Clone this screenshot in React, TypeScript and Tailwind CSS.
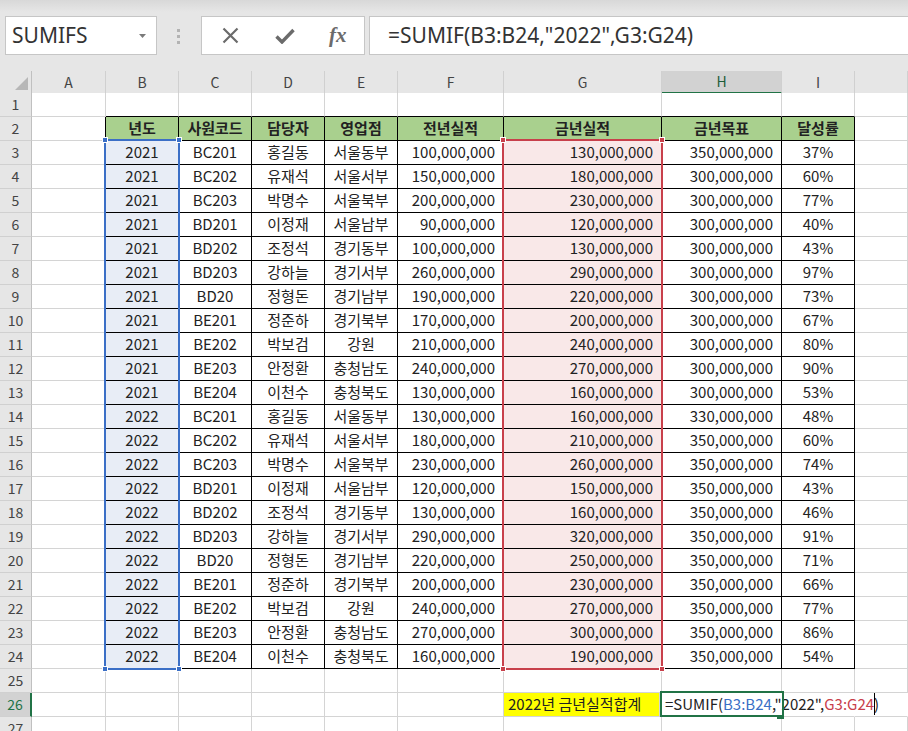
import React from 'react'

const GRID = 'grid grid-cols-[32px_74px_73px_73px_73px_73px_106px_158px_120px_73px_1fr]'
const CELL_FONT = "font-['Noto_Sans_CJK_KR',sans-serif]"

type Row = [string, string, string, string, string, string, string, string]

const header: Row = ['년도', '사원코드', '담당자', '영업점', '전년실적', '금년실적', '금년목표', '달성률']

const rows: Row[] = [
  ['2021', 'BC201', '홍길동', '서울동부', '100,000,000', '130,000,000', '350,000,000', '37%'],
  ['2021', 'BC202', '유재석', '서울서부', '150,000,000', '180,000,000', '300,000,000', '60%'],
  ['2021', 'BC203', '박명수', '서울북부', '200,000,000', '230,000,000', '300,000,000', '77%'],
  ['2021', 'BD201', '이정재', '서울남부', '90,000,000', '120,000,000', '300,000,000', '40%'],
  ['2021', 'BD202', '조정석', '경기동부', '100,000,000', '130,000,000', '300,000,000', '43%'],
  ['2021', 'BD203', '강하늘', '경기서부', '260,000,000', '290,000,000', '300,000,000', '97%'],
  ['2021', 'BD20', '정형돈', '경기남부', '190,000,000', '220,000,000', '300,000,000', '73%'],
  ['2021', 'BE201', '정준하', '경기북부', '170,000,000', '200,000,000', '300,000,000', '67%'],
  ['2021', 'BE202', '박보검', '강원', '210,000,000', '240,000,000', '300,000,000', '80%'],
  ['2021', 'BE203', '안정환', '충청남도', '240,000,000', '270,000,000', '300,000,000', '90%'],
  ['2021', 'BE204', '이천수', '충청북도', '130,000,000', '160,000,000', '300,000,000', '53%'],
  ['2022', 'BC201', '홍길동', '서울동부', '130,000,000', '160,000,000', '330,000,000', '48%'],
  ['2022', 'BC202', '유재석', '서울서부', '180,000,000', '210,000,000', '350,000,000', '60%'],
  ['2022', 'BC203', '박명수', '서울북부', '230,000,000', '260,000,000', '350,000,000', '74%'],
  ['2022', 'BD201', '이정재', '서울남부', '120,000,000', '150,000,000', '350,000,000', '43%'],
  ['2022', 'BD202', '조정석', '경기동부', '130,000,000', '160,000,000', '350,000,000', '46%'],
  ['2022', 'BD203', '강하늘', '경기서부', '290,000,000', '320,000,000', '350,000,000', '91%'],
  ['2022', 'BD20', '정형돈', '경기남부', '220,000,000', '250,000,000', '350,000,000', '71%'],
  ['2022', 'BE201', '정준하', '경기북부', '200,000,000', '230,000,000', '350,000,000', '66%'],
  ['2022', 'BE202', '박보검', '강원', '240,000,000', '270,000,000', '350,000,000', '77%'],
  ['2022', 'BE203', '안정환', '충청남도', '270,000,000', '300,000,000', '350,000,000', '86%'],
  ['2022', 'BE204', '이천수', '충청북도', '160,000,000', '190,000,000', '350,000,000', '54%'],
]

const columns = ['A', 'B', 'C', 'D', 'E', 'F', 'G', 'H', 'I', '']

function cellText(r: number, c: number): React.ReactNode {
  if (r === 2 && c >= 2 && c <= 9) return header[c - 2]
  if (r >= 3 && r <= 24 && c >= 2 && c <= 9) return rows[r - 3][c - 2]
  if (r === 26 && c === 7) return '2022년 금년실적합계'
  if (r === 26 && c === 8)
    return (
      <span>
        =SUMIF(<span className="text-[#3b6fc6]">B3:B24</span>,"2022",<span className="text-[#c8404b]">G3:G24</span>)
      </span>
    )
  return null
}

function cellClass(r: number, c: number) {
  const inTable = r >= 2 && r <= 24 && c >= 2 && c <= 9
  const right = inTable || (c === 1 && r >= 2 && r <= 24) ? 'border-r-black' : 'border-r-[#d4d4d4]'
  const bottom = inTable || (r === 1 && c >= 2 && c <= 9) ? 'border-b-black' : 'border-b-[#d4d4d4]'
  const hideRight = r === 26 && c >= 8 ? 'border-r-transparent' : right

  let fill = 'bg-white'
  if (r === 2 && c >= 2 && c <= 9) fill = 'bg-[#a9d08e] font-bold'
  else if (r >= 3 && r <= 24 && c === 2) fill = 'bg-[#e8edf6]'
  else if (r >= 3 && r <= 24 && c === 7) fill = 'bg-[#f9e8e8]'
  else if (r === 26 && c === 7) fill = 'bg-[#ffff00] mr-[2px]'

  let align = 'justify-center'
  if (r >= 3 && c >= 6 && c <= 8) align = 'justify-end pr-[8px]'
  if (r === 26 && c === 7) align = 'justify-start pl-[4px]'
  // editing cell: text runs over the empty cells to its right
  if (r === 26 && c === 8) align = 'justify-start pl-[3px] overflow-visible z-10'

  return `flex items-center border-r border-b ${hideRight} ${bottom} ${fill} ${align}`
}

function Corner({ x, y, color }: { x: number; y: number; color: string }) {
  return (
    <div
      className={`absolute h-[6px] w-[6px] border border-white ${color}`}
      style={{ left: x - 3, top: y - 3 }}
    />
  )
}

export default function App() {
  return (
    <div className="h-[731px] w-[908px] overflow-hidden bg-white text-[#222]">
      {/* formula bar */}
      <div className="flex h-[71px] items-start bg-[linear-gradient(#d8d8d8,#e6e6e6_12px)] font-['Noto_Sans',sans-serif]">
        <div className="ml-[5px] mt-[16px] flex h-[39px] w-[152px] items-center justify-between border border-[#c6c6c6] bg-white pl-[6px] pr-[10px]">
          <span className="text-[21px] leading-none text-[#333]">SUMIFS</span>
          <svg width="7" height="4" viewBox="0 0 7 4">
            <path d="M0 0h7L3.5 4z" fill="#7a7a7a" />
          </svg>
        </div>
        <div className="ml-[20px] mt-[29px] flex flex-col gap-[3px]">
          <div className="h-[3px] w-[3px] bg-[#b3b3b3]" />
          <div className="h-[3px] w-[3px] bg-[#b3b3b3]" />
          <div className="h-[3px] w-[3px] bg-[#b3b3b3]" />
        </div>
        <div className="ml-[21px] mt-[16px] flex h-[39px] w-[164px] items-center border border-[#c6c6c6] bg-white">
          <svg className="ml-[20px]" width="17" height="17" viewBox="0 0 17 17">
            <path d="M1.5 1.5l14 14M15.5 1.5l-14 14" stroke="#6b6b6b" strokeWidth="2.2" />
          </svg>
          <svg className="ml-[36px]" width="20" height="16" viewBox="0 0 20 16">
            <path d="M1.5 8.5l5.5 5.5L18.5 2" stroke="#6b6b6b" strokeWidth="3.4" fill="none" />
          </svg>
          <span className="ml-[34px] font-['Liberation_Serif',serif] text-[21px] font-bold italic leading-none text-[#6b6b6b]">
            fx
          </span>
        </div>
        <div className="ml-[4px] mt-[16px] flex h-[39px] flex-1 items-center border border-r-0 border-[#c6c6c6] bg-white pl-[18px]">
          <span className="text-[21px] leading-none text-[#333]">=SUMIF(B3:B24,"2022",G3:G24)</span>
        </div>
      </div>

      {/* sheet */}
      <div className={`relative ${CELL_FONT} text-[15px]`}>
        <div className={`${GRID} h-[22px] bg-[#e6e6e6] text-[14px] text-[#444]`}>
          <div className="flex items-end justify-end border-r border-b border-r-[#c0c0c0] border-b-[#c0c0c0] pb-[3px] pr-[3px]">
            <svg width="13" height="13" viewBox="0 0 13 13">
              <path d="M13 0v13H0z" fill="#b7b7b7" />
            </svg>
          </div>
          {columns.map((col) =>
            col === 'H' ? (
              <div
                key={col}
                className="flex items-center justify-center border-r border-b-2 border-r-[#d0d0d0] border-b-[#217346] bg-[#d2d2d2] text-[#1d5e3a]"
              >
                {col}
              </div>
            ) : (
              <div
                key={col || 'J'}
                className="flex items-center justify-center border-r border-b border-r-[#d0d0d0] border-b-[#c0c0c0]"
              >
                {col}
              </div>
            ),
          )}
        </div>

        {Array.from({ length: 27 }, (_, i) => i + 1).map((r) => (
          <div key={r} className={`${GRID} h-6`}>
            <div
              className={
                r === 26
                  ? 'flex items-center justify-center border-r-2 border-b border-r-[#217346] border-b-[#d0d0d0] bg-[#d2d2d2] text-[14px] text-[#217346]'
                  : 'flex items-center justify-center border-r border-b border-r-[#c0c0c0] border-b-[#d0d0d0] bg-[#e6e6e6] text-[14px] text-[#444]'
              }
            >
              {r}
            </div>
            {Array.from({ length: 10 }, (_, j) => j + 1).map((c) => (
              <div key={c} className={`${cellClass(r, c)} whitespace-nowrap`}>
                {cellText(r, c)}
              </div>
            ))}
          </div>
        ))}

        {/* B3:B24 range */}
        <div className="absolute left-[104px] top-[68px] h-[531px] w-[76px] border-2 border-[#3b6fc6]" />
        <Corner x={105} y={69} color="bg-[#3b6fc6]" />
        <Corner x={179} y={69} color="bg-[#3b6fc6]" />
        <Corner x={105} y={598} color="bg-[#3b6fc6]" />
        <Corner x={179} y={598} color="bg-[#3b6fc6]" />

        {/* G3:G24 range */}
        <div className="absolute left-[502px] top-[68px] h-[531px] w-[161px] border-2 border-[#c8404b]" />
        <Corner x={503} y={69} color="bg-[#c8404b]" />
        <Corner x={662} y={69} color="bg-[#c8404b]" />
        <Corner x={503} y={598} color="bg-[#c8404b]" />
        <Corner x={662} y={598} color="bg-[#c8404b]" />

        {/* active cell H26 */}
        <div className="absolute left-[660px] top-[620px] z-20 h-[26px] w-[124px] border-2 border-[#217346]" />
        <div className="absolute left-[777px] top-[644px] z-20 h-[4px] w-[7px] bg-[#217346]" />
        <div className="absolute left-[874px] top-[622px] z-20 h-[22px] w-px bg-black" />
      </div>
    </div>
  )
}
